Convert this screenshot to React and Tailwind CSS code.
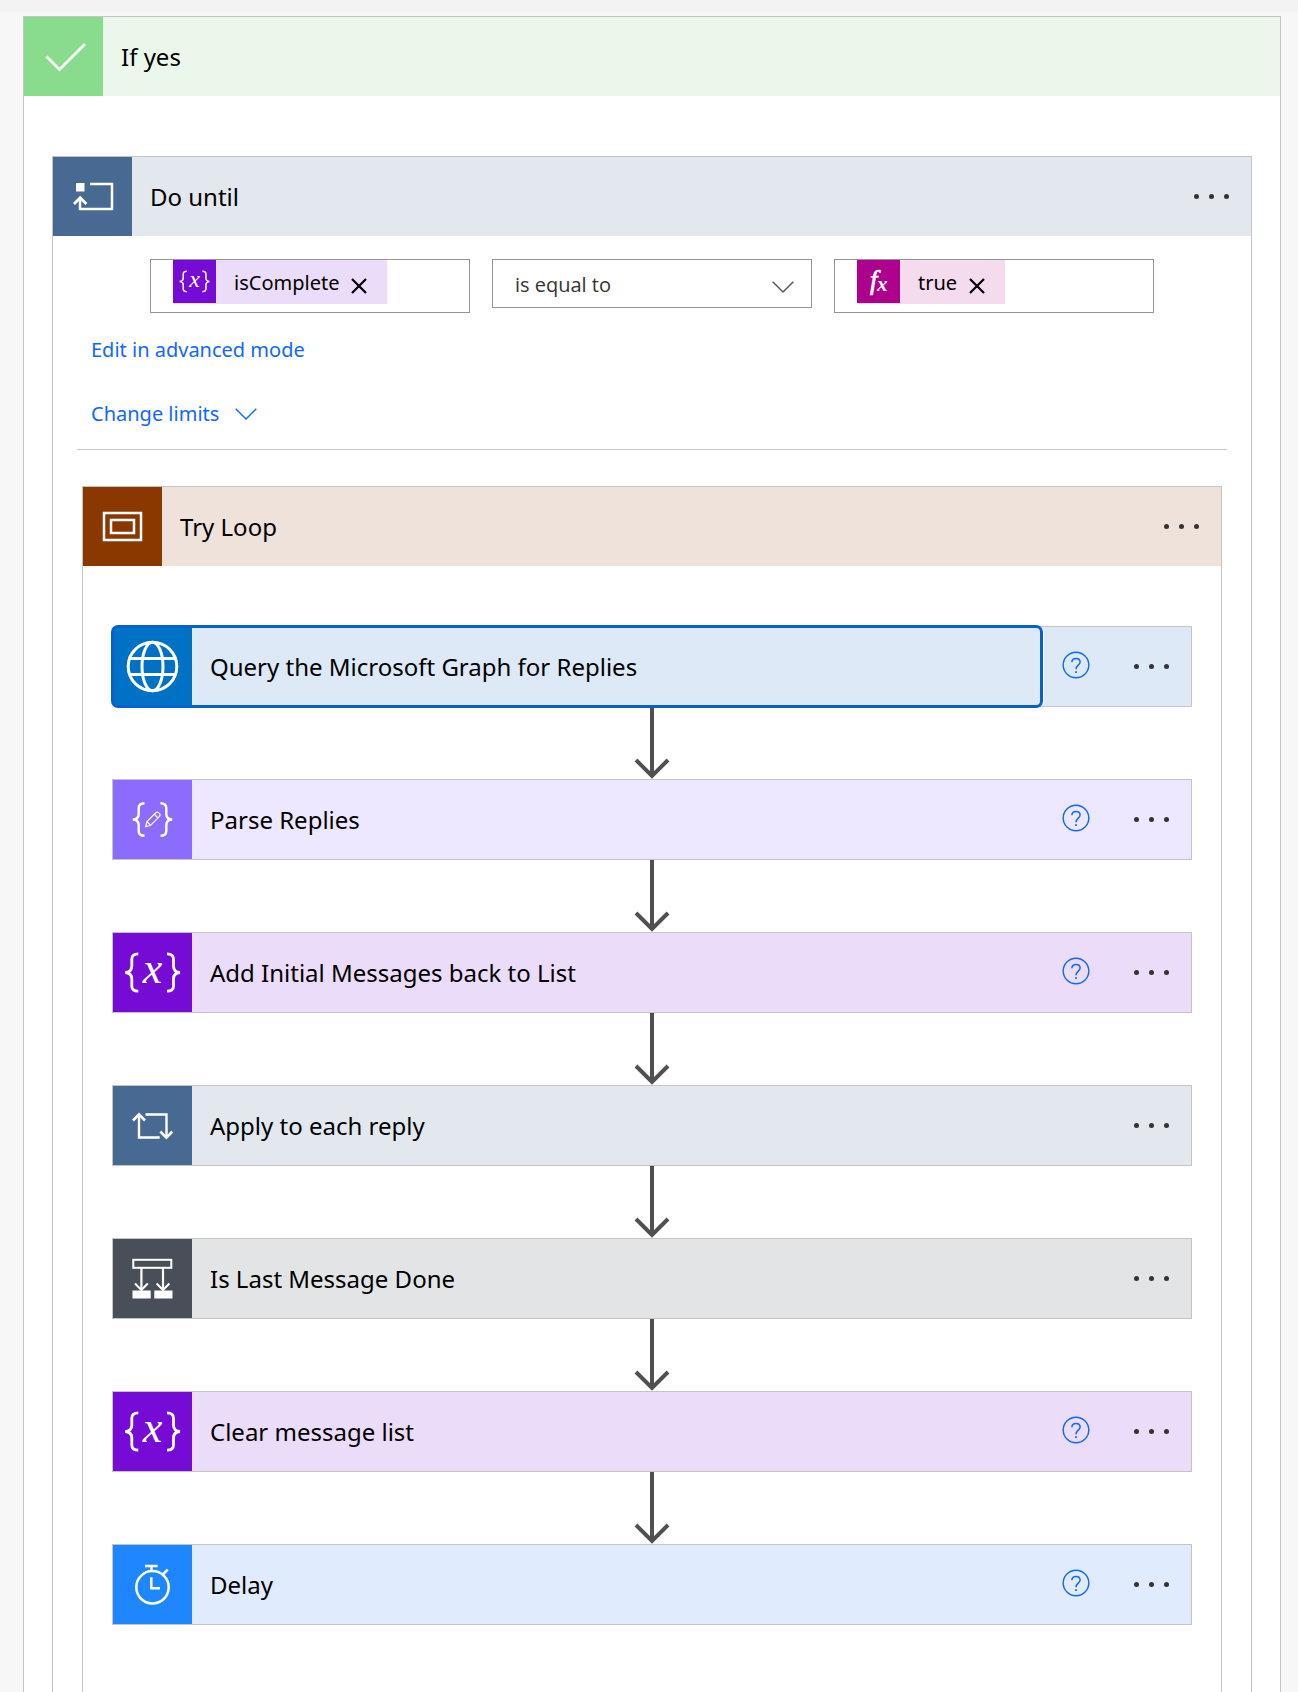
import React from "react";

const CheckIcon = () => (
  <path d="M22.5 39.5 35.5 52.5 61 27" strokeWidth="2.8" />
);

const UntilIcon = () => (
  <>
    <rect x="23" y="26" width="8.5" height="8.5" fill="white" stroke="none" />
    <path d="M37 27H59V52H27V41" strokeWidth="2.5" />
    <path d="M21 47 27.2 40.8 33.4 47" strokeWidth="2.8" />
  </>
);

const ScopeIcon = () => (
  <>
    <rect x="21" y="26" width="37" height="27" strokeWidth="2.5" />
    <rect x="28" y="33" width="23" height="13" strokeWidth="2.5" />
  </>
);

const GlobeIcon = () => (
  <g strokeWidth="3">
    <circle cx="39.5" cy="39.5" r="24.3" />
    <ellipse cx="39.5" cy="39.5" rx="10.5" ry="24.3" />
    <path d="M16.5 31.5h46M16.5 47.5h46" />
  </g>
);

const ParseIcon = () => (
  <>
    <path
      d="M31.5 23.2C27 23.2 25.7 25 25.7 28V34C25.7 37.5 23.5 39.3 19.8 39.5 23.5 39.7 25.7 41.5 25.7 45V51C25.7 54 27 55.8 31.5 55.8M47.5 23.2C52 23.2 53.3 25 53.3 28V34C53.3 37.5 55.5 39.3 59.2 39.5 55.5 39.7 53.3 41.5 53.3 45V51C53.3 54 52 55.8 47.5 55.8"
      strokeWidth="2.4"
    />
    <path
      d="M32.7 46.6 34 41.5 42.8 32.8C44.8 31 48.3 34.3 46.5 36.4L37.6 45.3ZM34 41.5 37.6 45.3M41.3 34.2 45 38"
      strokeWidth="1.2"
    />
  </>
);

const VariableIcon = () => (
  <>
    <path
      d="M25.3 20.8C20.5 20.8 18.8 22.5 18.8 26V33C18.8 37 16.5 39.2 12.2 39.5 16.5 39.8 18.8 42 18.8 46V53C18.8 56.5 20.5 58.2 25.3 58.2M54 20.8C58.8 20.8 60.5 22.5 60.5 26V33C60.5 37 62.8 39.2 67 39.5 62.8 39.8 60.5 42 60.5 46V53C60.5 56.5 58.8 58.2 54 58.2"
      strokeWidth="2.8"
    />
    <text
      x="39.5"
      y="50"
      textAnchor="middle"
      fill="white"
      stroke="none"
      className="font-['Liberation_Serif',serif] text-[44px] italic"
    >
      x
    </text>
  </>
);

const EachIcon = () => (
  <>
    <path d="M46.7 51.5H26V29M32.5 28.5H53.5V50" strokeWidth="2.4" />
    <path d="M20 34.5 26 28.3 32 34.5M47.4 45.5 53.4 51.7 59.4 45.5" strokeWidth="2.6" />
  </>
);

const ConditionIcon = () => (
  <>
    <rect x="20.3" y="20.8" width="38" height="8" strokeWidth="2" />
    <path d="M28.4 29V50M50 29V50" strokeWidth="2.2" />
    <path d="M22 44.5 28.4 51 34.8 44.5M43.6 44.5 50 51 56.4 44.5" strokeWidth="2" />
    <path d="M19.5 51.5h18.2v8H19.5zM41.3 51.5h18.2v8H41.3z" fill="white" stroke="none" />
  </>
);

const DelayIcon = () => (
  <g strokeWidth="2.5">
    <circle cx="39.5" cy="42.3" r="16.2" />
    <path d="M32 21H44.7M38.5 21V26M49.7 29.7 54.7 24.7M38.3 32.3V43.3H47" />
  </g>
);

const steps = [
  { title: "Query the Microsoft Graph for Replies", icon: GlobeIcon, tile: "bg-[#0072c6]", bar: "bg-[#dde9f7]", help: true, selected: true },
  { title: "Parse Replies", icon: ParseIcon, tile: "bg-[#8c6cff]", bar: "bg-[#ede7ff]", help: true },
  { title: "Add Initial Messages back to List", icon: VariableIcon, tile: "bg-[#770bd6]", bar: "bg-[#ebdcf9]", help: true },
  { title: "Apply to each reply", icon: EachIcon, tile: "bg-[#486991]", bar: "bg-[#e3e8ef]" },
  { title: "Is Last Message Done", icon: ConditionIcon, tile: "bg-[#484f58]", bar: "bg-[#e3e4e6]" },
  { title: "Clear message list", icon: VariableIcon, tile: "bg-[#770bd6]", bar: "bg-[#ebdcf9]", help: true },
  { title: "Delay", icon: DelayIcon, tile: "bg-[#1e86ff]", bar: "bg-[#e0ebfe]", help: true },
];

const Tile = ({ icon: Icon, color }) => (
  <span className={`block size-[79px] shrink-0 ${color}`}>
    <svg viewBox="0 0 79 79" className="size-full" fill="none" stroke="white" aria-hidden="true">
      <Icon />
    </svg>
  </span>
);

const MenuButton = ({ label }) => (
  <button
    type="button"
    aria-label={`Menu for ${label}`}
    className="mr-[22px] flex shrink-0 gap-[10px]"
  >
    <span className="size-[5px] rounded-full bg-[#333]" />
    <span className="size-[5px] rounded-full bg-[#333]" />
    <span className="size-[5px] rounded-full bg-[#333]" />
  </button>
);

const HelpButton = () => (
  <button type="button" aria-label="Help" className="mb-1">
    <svg viewBox="0 0 28 28" className="size-7" fill="none" stroke="#0f67ff" aria-hidden="true">
      <circle cx="14" cy="14" r="12.8" strokeWidth="1.4" />
      <path
        d="M9.9 11.3C9.9 8.9 11.5 7.5 14 7.5S18.1 8.9 18.1 11.1C18.1 14 14 14.4 14 18.2"
        strokeWidth="1.5"
      />
      <path d="M14 20.2V22" strokeWidth="1.8" />
    </svg>
  </button>
);

const Chevron = ({ className }) => (
  <svg viewBox="0 0 22 12" className={`h-3 w-[22px] ${className}`} fill="none" stroke="currentColor" aria-hidden="true">
    <path d="M0.7 0.7 11 11 21.3 0.7" strokeWidth="1.4" />
  </svg>
);

const Arrow = () => (
  <svg viewBox="0 0 36 72" className="mx-auto block h-[72px] w-9" fill="none" stroke="#505050" aria-hidden="true">
    <path d="M18 0V69M2 53 18 69 34 53" strokeWidth="4" />
  </svg>
);

const GroupHeader = ({ title, icon, tile, bar, menu }) => (
  <header className={`flex items-center ${bar}`}>
    <Tile icon={icon} color={tile} />
    <h2 className="flex-1 pl-[18px] text-2xl">{title}</h2>
    {menu && <MenuButton label={title} />}
  </header>
);

const StepCard = ({ step }) => (
  <div
    className={`flex items-stretch border border-[#c4c4c4] ${step.bar} ${
      step.selected ? "rounded-l-[6px]" : ""
    }`}
  >
    <button
      type="button"
      className={`flex flex-1 items-center text-left ${
        step.selected
          ? "z-10 overflow-hidden rounded-[5px] shadow-[3px_0_0_0_white] outline-3 -outline-offset-1 outline-[#0560d2]"
          : ""
      }`}
    >
      <Tile icon={step.icon} color={step.tile} />
      <span className="pl-[18px] text-2xl">{step.title}</span>
    </button>
    <div className="flex w-[150px] items-center justify-between pl-[21px]">
      {step.help ? <HelpButton /> : <span />}
      <MenuButton label={step.title} />
    </div>
  </div>
);

const TokenField = ({ label, name, tile, bar, children }) => (
  <div className="flex h-[54px] items-start border border-[#949494] bg-white pl-[22px]">
    <div className={`flex h-11 shrink-0 items-start pr-5 ${bar}`}>
      <span className={`block size-[43px] ${tile}`}>{children}</span>
      <span className="pl-[18px] text-xl leading-[45px]">{name}</span>
      <button type="button" aria-label={`Remove ${name}`} className="mt-[18px] ml-3">
        <svg viewBox="0 0 16 16" className="size-4" stroke="black" strokeWidth="2.2" aria-hidden="true">
          <path d="M1 1 15 15M15 1 1 15" />
        </svg>
      </button>
    </div>
    <input type="text" aria-label={label} className="h-full w-0 flex-1 outline-none" />
  </div>
);

const Condition = () => (
  <div className="grid grid-cols-3 items-start gap-[22px] px-[97px] pt-[23px]">
    <TokenField label="Left value" name="isComplete" tile="bg-[#770bd6]" bar="bg-[#ebdcf9]">
      <svg viewBox="0 0 79 79" className="size-full" fill="none" stroke="white" aria-hidden="true">
        <VariableIcon />
      </svg>
    </TokenField>
    <div className="relative">
      <select
        aria-label="Operator"
        className="h-[49px] w-full appearance-none border border-[#949494] bg-white pt-[2px] pl-[22px] font-['Open_Sans',sans-serif] text-xl text-[#333]"
      >
        <option>is equal to</option>
        <option>is not equal to</option>
      </select>
      <Chevron className="pointer-events-none absolute top-[22px] right-[18px] text-[#555]" />
    </div>
    <TokenField label="Right value" name="true" tile="bg-[#ad008c]" bar="bg-[#f4dbed]">
      <svg viewBox="0 0 43 43" className="size-full" fill="white" aria-hidden="true">
        <text
          x="13"
          y="29"
          stroke="white"
          strokeWidth="0.7"
          className="font-['Liberation_Serif',serif] text-[27px] italic"
        >
          f
        </text>
        <text x="20" y="31" className="font-['Liberation_Serif',serif] text-[21px] font-bold italic">
          x
        </text>
      </svg>
    </TokenField>
  </div>
);

const App = () => {
  return (
    <div className="flex min-h-screen flex-col border-t-12 border-[#f3f3f3] bg-[#f7f7f7] pt-1 pr-[17px] pl-[23px] font-['Noto_Sans',sans-serif] text-black">
      <section className="flex flex-1 flex-col border border-b-0 border-[#c4c4c4] bg-white">
        <GroupHeader title="If yes" icon={CheckIcon} tile="bg-[#89dc8e]" bar="bg-[#ecf7ec]" />

        <section className="mx-7 mt-[60px] flex flex-1 flex-col border border-b-0 border-[#c4c4c4]">
          <GroupHeader title="Do until" icon={UntilIcon} tile="bg-[#486991]" bar="bg-[#e3e8ef]" menu />
          <Condition />

          <div className="mx-6 flex flex-col items-start border-b border-[#c8c8c8] pt-[23px] pb-[21px] pl-[14px] text-xl leading-7 text-[#0f67ff]">
            <a href="#advanced">Edit in advanced mode</a>
            <button type="button" className="mt-9 flex items-center gap-4">
              Change limits
              <Chevron className="" />
            </button>
          </div>

          {/* Steps inside the loop */}
          <section className="mx-[29px] mt-9 flex-1 border border-b-0 border-[#c4c4c4]">
            <GroupHeader title="Try Loop" icon={ScopeIcon} tile="bg-[#8b3800]" bar="bg-[#eee2da]" menu />
            <div className="px-[29px] pt-[60px] pb-16">
              {steps.map((step, index) => (
                <React.Fragment key={step.title}>
                  {index > 0 && <Arrow />}
                  <StepCard step={step} />
                </React.Fragment>
              ))}
            </div>
          </section>
        </section>
      </section>
    </div>
  );
};

export default App;
